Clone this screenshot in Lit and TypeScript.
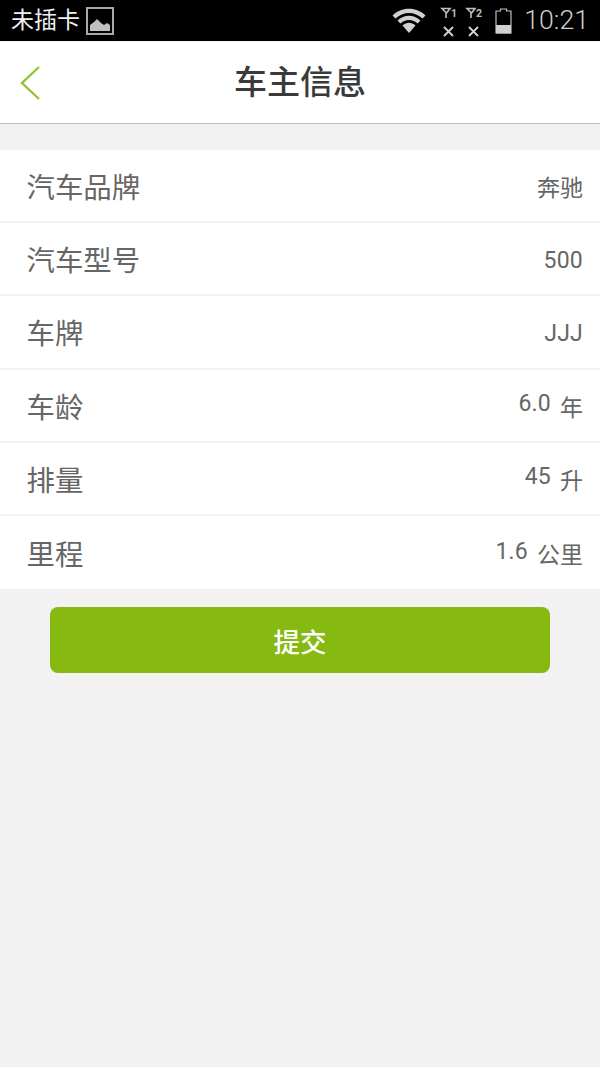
import { LitElement, html, css, svg } from "lit";
import { customElement } from "lit/decorators.js";

const rows: [string, string, string][] = [
  ["汽车品牌", "", "奔驰"],
  ["汽车型号", "500", ""],
  ["车牌", "JJJ", ""],
  ["车龄", "6.0", "年"],
  ["排量", "45", "升"],
  ["里程", "1.6", "公里"],
];

@customElement("app-root")
export class AppRoot extends LitElement {
  static styles = css`
    :host {
      display: flex;
      flex-direction: column;
      width: 600px;
      height: 1067px;
      background: #f2f2f2;
      font-family: "Roboto", "Noto Sans CJK SC", sans-serif;
      overflow: hidden;
    }
    .status {
      height: 41px;
      background: #000;
      display: flex;
      align-items: center;
      color: #f0f0f0;
      padding: 0 11px 0 11px;
      flex: none;
    }
    .carrier { font-size: 23px; line-height: 41px; }
    .pic { margin-left: 6px; display: block; }
    .spacer { flex: 1; }
    .wifi { display: block; margin-right: 14px; }
    .sim { display: block; margin-right: 5px; }
    .batt { display: block; margin-left: 5px; margin-right: 12px; }
    .time { font-size: 26.7px; color: #cfcfcf; line-height: 41px; font-weight: 300; }
    .header {
      height: 82px;
      flex: none;
      background: #fff;
      border-bottom: 1px solid #bdbdbd;
      box-sizing: border-box;
      margin-top: 1px;
      display: flex;
      align-items: center;
      justify-content: center;
      position: relative;
    }
    .back { position: absolute; left: 20px; top: 23px; display: block; }
    .title { font-size: 33px; font-weight: 500; color: #3a3a3a; line-height: 82px; }
    .list { margin-top: 26px; background: #fff; display: flex; flex-direction: column; }
    .row {
      height: 73.2px;
      box-sizing: border-box;
      border-bottom: 2px solid #f2f2f2;
      display: flex;
      align-items: center;
      justify-content: space-between;
      padding: 0 17px 0 26.5px;
    }
    .row:last-child { border-bottom: none; }
    .label { font-size: 28.4px; color: #666; }
    .value { display: flex; align-items: center; color: #666; }
    .num { font-size: 23px; letter-spacing: 0.2px; margin-top: -3px; }
    .unit { font-size: 23px; margin-left: 9px; margin-top: 1px; }
    .unit.only { margin-left: 0; margin-top: 0; }
    .num.only { margin-top: 3px; }
    .submit {
      margin: 18px 50px 0;
      height: 66px;
      border-radius: 8px;
      background: #86b912;
      color: #fff;
      font-size: 26.5px;
      font-weight: 500;
      display: flex;
      align-items: center;
      justify-content: center;
    }
  `;

  private sim(n: string) {
    return html`<svg class="sim" width="20" height="34" viewBox="0 0 20 34">
      <path d="M2 4.500h8L6.500 9zM6 8v6" fill="none" stroke="#bdbdbd" stroke-width="1.600"/>
      <text x="11" y="13" font-size="10.500" font-weight="700" fill="#bdbdbd" font-family="Roboto">${n}</text>
      ${svg`<path d="M4 23l9 9M13 23l-9 9" stroke="#d4d4d4" stroke-width="1.800" fill="none"/>`}
    </svg>`;
  }

  render() {
    return html`
      <div class="status">
        <span class="carrier">未插卡</span>
        <svg class="pic" width="28" height="28" viewBox="0 0 28 28">
          <rect x="1" y="1" width="26" height="26" fill="none" stroke="#a8a8a8" stroke-width="2"/>
          <path d="M4 24v-6l4-3 3-3 4 4 3 2 3-2 3 2v6z" fill="#c0c0c0"/>
        </svg>
        <span class="spacer"></span>
        <svg class="wifi" width="34" height="26" viewBox="0 0 34 26">
          <path d="M0.500 7.500C9 -1.500 25 -1.500 33.500 7.500L30.500 10.500C23 3 11 3 3.500 10.500Z" fill="#d0d0d0"/>
          <path d="M5.500 12.500C12 6 22 6 28.500 12.500L25.500 15.500C21 10.800 13 10.800 8.500 15.500Z" fill="#d0d0d0"/>
          <path d="M10.500 17.500C14.500 13.800 19.500 13.800 23.500 17.500L17 25Z" fill="#d0d0d0"/>
        </svg>
        ${this.sim("1")}${this.sim("2")}
        <svg class="batt" width="17" height="26" viewBox="0 0 17 26">
          <path d="M5.500 3V1h6v2h4.500v22H1V3z" fill="none" stroke="#bdbdbd" stroke-width="1.200"/>
          <rect x="1" y="17" width="15" height="8.500" fill="#d0d0d0"/>
        </svg>
        <span class="time">10:21</span>
      </div>
      <div class="header">
        <svg class="back" width="22" height="36" viewBox="0 0 22 36">
          <path d="M19 2L2 18l17 16" fill="none" stroke="#93c435" stroke-width="2.400"/>
        </svg>
        <span class="title">车主信息</span>
      </div>
      <div class="list">
        ${rows.map(
          ([l, n, u]) => html`<div class="row">
            <span class="label">${l}</span>
            <span class="value">
              ${n ? html`<span class="num ${u ? "" : "only"}">${n}</span>` : ""}
              ${u ? html`<span class="unit ${n ? "" : "only"}">${u}</span>` : ""}
            </span>
          </div>`
        )}
      </div>
      <div class="submit">提交</div>
    `;
  }
}
